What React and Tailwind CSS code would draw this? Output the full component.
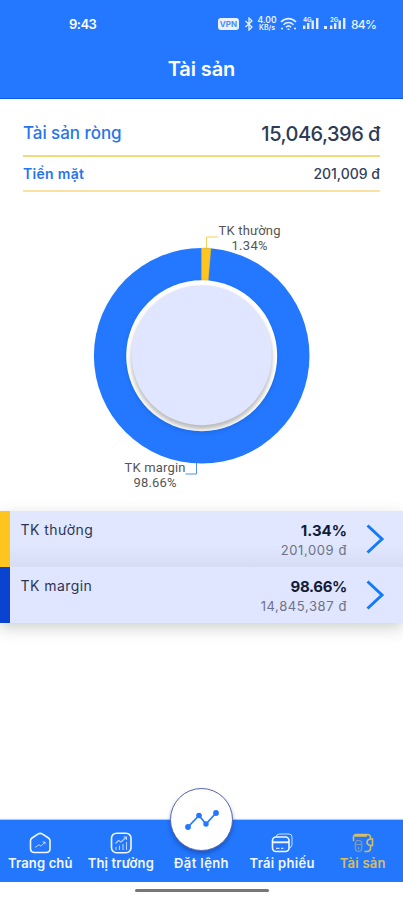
const ACCOUNTS = [
  { name: "TK thường", percent: "1.34%", value: "201,009 đ", bar: "bg-[#fdc51e]", bg: "bg-linear-to-b from-[#e1e7ff] from-60% to-[#d6dcf3]", pctCls: "tracking-[0px]" },
  { name: "TK margin", percent: "98.66%", value: "14,845,387 đ", bar: "bg-[#0a43cf]", bg: "bg-[#e0e6ff]", pctCls: "tracking-[-0.35px]" },
];

function SignalIcon({ label }) {
  return (
    <svg width="18" height="14" viewBox="0 0 18 14" fill="#e4eeff">
      <text x="1" y="5.6" fontSize="6" fontWeight="700">{label}</text>
      <rect x="1" y="9.500" width="2.4" height="3.500" />
      <rect x="5" y="7" width="2.4" height="6" />
      <rect x="9.5" y="4.5" width="2.4" height="8.5" />
      <rect x="14" y="2" width="2.4" height="11" />
    </svg>
  );
}

function StatusBar() {
  return (
    <div className="relative h-12 text-white">
      <span className="absolute left-[69px] top-[15px] text-[13px] leading-[19px] font-semibold tracking-[-0.5px]">9:43</span>
      <span className="absolute left-[218px] top-[18px] h-3 w-[21px] rounded-[3px] bg-[#eaf2ff] text-center text-[8px] leading-3 font-bold text-[#4f8df8]">VPN</span>
      <svg className="absolute left-[244px] top-[17px]" width="10" height="14" viewBox="0 0 10 14" fill="none" stroke="#e4eeff" strokeWidth="1.3">
        <path d="M1.500 4 8 10 5 13V1l3 3-6.500 6" />
      </svg>
      <div className="absolute left-[256px] top-[16px] flex w-[22px] flex-col items-center font-semibold text-[#eaf2ff]">
        <span className="text-[8.5px] leading-[8px]">4.00</span>
        <span className="text-[7px] leading-[7px]">KB/s</span>
      </div>
      <svg className="absolute left-[280px] top-[17px]" width="17" height="14" viewBox="0 0 17 14" fill="none" stroke="#e4eeff" strokeWidth="1.6">
        <path d="M1 5c4.500-4.500 10.500-4.500 15 0M3.500 7.700c3-3 7-3 10 0M6 10.200c1.500-1.500 3.500-1.500 5 0" />
        <path d="M7.500 12.300h2M1 11.500h2M14 11.500h2" />
      </svg>
      <div className="absolute left-[302px] top-[16px]"><SignalIcon label="4G" /></div>
      <div className="absolute left-[324px] top-[26px] h-[3px] w-[3px] bg-[#e4eeff]" />
      <div className="absolute left-[329px] top-[16px]"><SignalIcon label="2G" /></div>
      <span className="absolute left-[351px] top-[15px] text-[12px] leading-[19px] font-medium tracking-[-0.7px] text-[#eaf2ff]">84%</span>
    </div>
  );
}

function Donut() {
  return (
    <svg className="block" width="403" height="319" viewBox="0 192 403 319">
      <defs>
        <filter id="soft" x="-20%" y="-20%" width="140%" height="140%">
          <feGaussianBlur stdDeviation="2" />
        </filter>
        <clipPath id="hole">
          <circle cx="201.700" cy="355.800" r="75.500" />
        </clipPath>
      </defs>
      <circle cx="201.700" cy="355.800" r="107.800" fill="#2378ff" />
      <path d="M201.700 355.800V248A107.800 107.800 0 0 1 210.800 248.400Z" fill="#fdc51e" stroke="#fdc51e" strokeWidth="0.600" />
      <circle cx="201.700" cy="357.500" r="75.500" fill="#0d4bb5" opacity="0.3" filter="url(#soft)" />
      <circle cx="201.700" cy="355.800" r="75.500" fill="#fff" />
      <g clipPath="url(#hole)">
        <circle cx="201.700" cy="358.700" r="70.500" fill="#a9aaa8" opacity="0.8" filter="url(#soft)" />
      </g>
      <circle cx="201.700" cy="355.200" r="70" fill="#e0e6ff" />
      <path d="M206.500 248v-11h11.500" fill="none" stroke="#f6cf58" />
      <path d="M196.500 463v11h-11" fill="none" stroke="#5590ee" />
      <g fontFamily="Roboto, sans-serif" fontSize="13" fill="#555" textAnchor="middle">
        <text x="249.500" y="234.500" textLength="62">TK thường</text>
        <text x="249.500" y="250" textLength="36">1.34%</text>
        <text x="155" y="471.500" textLength="61">TK margin</text>
        <text x="155" y="487" textLength="43">98.66%</text>
      </g>
    </svg>
  );
}

function AccountRow({ item }) {
  return (
    <div className={`flex h-14 ${item.bg}`}>
      <div className={`w-[9.5px] ${item.bar}`} />
      <div className="flex-1 pt-[9px] pl-[11px] text-[14px] leading-5 tracking-[0.45px] text-[#2c3555]">{item.name}</div>
      <div className="pt-[9px] text-right">
        <div className={`text-[15px] leading-[21px] font-bold text-[#131a35] ${item.pctCls}`}>{item.percent}</div>
        <div className="text-[13px] leading-[18px] tracking-[0.6px] text-[#6d7287]">{item.value}</div>
      </div>
      <svg className="mt-[12px] mr-[17px] ml-[18px]" width="21" height="32" viewBox="0 0 21 32" fill="none" stroke="#147bf7" strokeWidth="3">
        <path d="M2.500 2.500 17 16 2.500 29.500" />
      </svg>
    </div>
  );
}

const TABS = [
  {
    label: "Trang chủ",
    cls: "text-[#f2f7ff] tracking-[0.15px]",
    icon: (
      <>
        <path d="M9.300 1.900 3 6Q1.500 7 1.500 8.800V16.500Q1.500 20.500 5.500 20.500H17Q21 20.500 21 16.500V8.800Q21 7 19.500 6L13.200 1.900Q11.200 .8 9.300 1.900Z" />
        <path d="m6 15.500 4-2.800 2 1.500 4-4M13.500 10H16v2.300" strokeWidth="1" opacity=".7" />
      </>
    ),
  },
  {
    label: "Thị trường",
    cls: "text-[#f2f7ff] tracking-[0.15px]",
    icon: (
      <>
        <rect x="1.500" y="1.200" width="19.500" height="19.500" rx="5" />
        <path d="m5.500 11.500 3-3 2.500 1.500 5.500-5M13.500 5h3v3M6 18v-3M9.500 18v-4.500M13 18v-6M16.500 18v-8" strokeWidth="1.100" opacity=".7" />
      </>
    ),
  },
  { label: "Đặt lệnh", cls: "text-[#f2f7ff] tracking-[0.4px]", icon: null },
  {
    label: "Trái phiếu",
    cls: "text-[#f2f7ff] tracking-[0.3px]",
    icon: (
      <>
        <path d="M5 5Q5.500 2 8.500 2H18Q21 2 21 5V12.500Q21 15.500 18 16" strokeWidth="1" opacity=".8" />
        <rect x="1.500" y="5" width="16.500" height="14.500" rx="3.500" />
        <path d="M1.500 10.300H18" strokeWidth="1.900" />
        <path d="M5 16.300h3.500M10 16.300h2.500" strokeWidth="1" />
      </>
    ),
  },
  {
    label: "Tài sản",
    cls: "text-[#d9bd62] tracking-[0.25px]",
    icon: (
      <>
        <path d="M1.500 9V5.500Q1.500 2.500 4.500 2.500H15Q18.500 2.500 18.500 5.500V7M18.500 13.500V16Q18.500 19.500 15 19.500H12.500M3 4H15" />
        <path d="M20.500 7H18Q15 8 15 10.200T18 13.500H20.500Z" />
        <g opacity=".55" strokeWidth="1.200">
          <rect x="3.300" y="8.500" width="6.400" height="11" rx="3" />
          <path d="M3.300 12.500h6.400M6.500 15v2.500" />
        </g>
      </>
    ),
  },
];

function BottomNav() {
  return (
    <nav className="relative flex h-[62px] bg-[#2377fd] shadow-[0_-1px_1px_rgba(20,80,190,0.3)]">
      {TABS.map((tab) => (
        <div key={tab.label} className={`flex flex-1 flex-col items-center pt-[12px] ${tab.cls}`}>
          <svg width="22" height="22" viewBox="0 0 22 22" fill="none" stroke="currentColor" strokeWidth="1.600">
            {tab.icon}
          </svg>
          <span className="text-[13px] leading-[18px] font-semibold whitespace-nowrap">{tab.label}</span>
        </div>
      ))}
      <div className="absolute top-[-32px] left-[170px] flex size-[63px] items-center justify-center rounded-full border border-[#5566b2] bg-white shadow-[0_3px_4px_rgba(10,45,130,0.4)]">
        <svg width="35" height="22" viewBox="0 0 35 22" fill="#2378ff" stroke="#2378ff" strokeWidth="1.700">
          <path d="m4 18 11-11.500 7 8.500L32 4" fill="none" />
          <g stroke="none">
            <circle cx="4" cy="18" r="2.900" />
            <circle cx="15" cy="6.500" r="2.800" />
            <circle cx="22" cy="15" r="2.700" />
            <circle cx="32" cy="4" r="2.900" />
          </g>
        </svg>
      </div>
    </nav>
  );
}

export default function App() {
  return (
    <div className="flex h-[900px] w-[403px] flex-col overflow-hidden bg-white font-['Inter','Liberation_Sans',sans-serif]">
      <header className="h-[98.5px] border-b border-[#0b59ea] bg-[#2378ff]">
        <StatusBar />
        <h1 className="mt-[7px] text-center text-[20px] leading-7 font-semibold tracking-[-0.1px] text-white">Tài sản</h1>
      </header>

      <section className="h-[93.5px] px-[23px]">
        <div className="flex h-[58px] items-center justify-between border-b-2 border-[#f3da80] pt-[15px]">
          <span className="text-[17px] font-medium tracking-[-0.05px] text-[#2874ed]">Tài sản ròng</span>
          <span className="text-[20px] font-medium tracking-[-0.5px] text-[#2d3b55]">15,046,396 đ</span>
        </div>
        <div className="flex h-[35px] items-center justify-between border-b-2 border-[#f9e2a0] pt-px">
          <span className="text-[14px] font-semibold tracking-[0.3px] text-[#2874ed]">Tiền mặt</span>
          <span className="text-[14px] font-medium text-[#35405a]">201,009 đ</span>
        </div>
      </section>

      <Donut />

      <section className="shadow-[0_5px_14px_rgba(60,70,60,0.25)]">
        {ACCOUNTS.map((item) => (
          <AccountRow key={item.name} item={item} />
        ))}
      </section>

      <div className="mt-auto">
        <BottomNav />
        <div className="flex h-[18px] justify-center pt-[7px]">
          <div className="h-[3px] w-[134px] rounded-full bg-[#777]" />
        </div>
      </div>
    </div>
  );
}
